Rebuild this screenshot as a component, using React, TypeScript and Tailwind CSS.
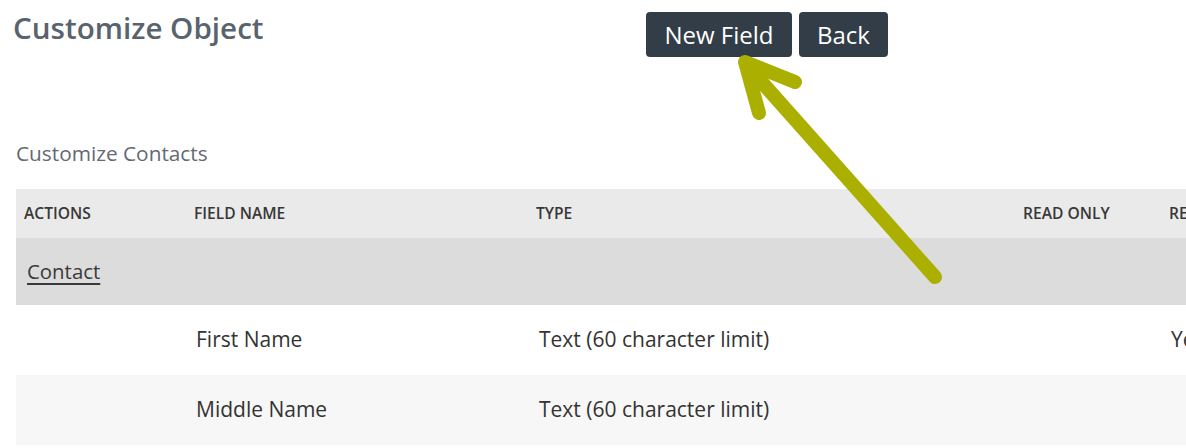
import React from 'react';

const font = { fontFamily: '"Open Sans", "Liberation Sans", sans-serif' };

const rows = [
  { name: 'First Name', type: 'Text (60 character limit)', readOnly: '', req: 'Yes', bg: 'bg-white' },
  { name: 'Middle Name', type: 'Text (60 character limit)', readOnly: '', req: '', bg: 'bg-[#f7f7f7]' },
];

const Arrow = () => (
  <svg className="absolute left-0 top-0 pointer-events-none" width="1186" height="448">
    <g stroke="#abb000" strokeWidth="14" strokeLinecap="round" strokeLinejoin="round" fill="none">
      <line x1="751" y1="70" x2="935" y2="277" />
      <polyline points="795,82 745,62 759,113" />
    </g>
    <polygon points="743,59 770,70 752,86" fill="#abb000" />
  </svg>
);

export default function App() {
  return (
    <div className="relative w-[1186px] h-[448px] overflow-hidden bg-white" style={font}>
      {/* Header */}
      <div className="flex items-start h-[106px]">
        <h1 className="pl-[13px] pt-[8px] w-[646px] text-[29.6px] leading-[40px] font-semibold text-[#59636d]">
          Customize Object
        </h1>
        <div className="flex gap-[7px] pt-[12px]">
          <button className="h-[45px] w-[146px] rounded-[4px] bg-[#323d48] text-white text-[24px]">New Field</button>
          <button className="h-[45px] w-[89px] rounded-[4px] bg-[#323d48] text-white text-[24px]">Back</button>
        </div>
      </div>

      <div className="pl-[16px] pt-[33px] h-[83px] text-[20.8px] leading-[28px] text-[#636a72]">Customize Contacts</div>

      {/* Table */}
      <div className="ml-[16px] w-[1300px]">
        <div className="grid grid-cols-[170px_342px_487px_146px_155px] h-[49px] items-center bg-[#eaeaea] text-[15.6px] font-semibold text-[#383838]">
          <div className="pl-[8px]">ACTIONS</div>
          <div className="pl-[8px]">FIELD NAME</div>
          <div className="pl-[8px]">TYPE</div>
          <div className="pl-[8px]">READ ONLY</div>
          <div className="pl-[8px]">REQUIRED</div>
        </div>
        <div className="h-[67px] flex items-center bg-[#dcdcdc] pl-[11px] text-[20.4px] text-[#3a3a3a]">
          <span className="underline underline-offset-[4px]">Contact</span>
        </div>
        {rows.map((r) => (
          <div
            key={r.name}
            className={`grid grid-cols-[170px_342px_487px_146px_155px] h-[70px] items-center text-[21px] text-[#333333] ${r.bg}`}
          >
            <div />
            <div className="pl-[10px]">{r.name}</div>
            <div className="pl-[11px]">{r.type}</div>
            <div className="pl-[8px]">{r.readOnly}</div>
            <div className="pl-[10px]">{r.req}</div>
          </div>
        ))}
      </div>

      <Arrow />
    </div>
  );
}
